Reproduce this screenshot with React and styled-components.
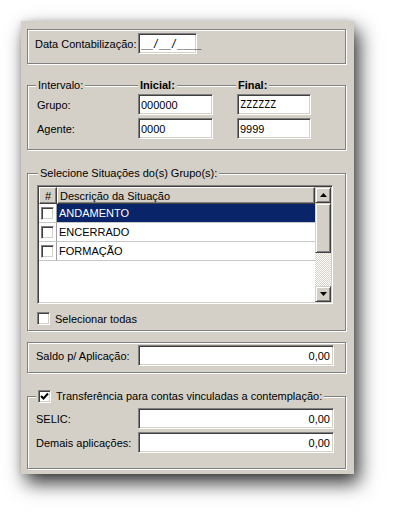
import React from 'react';
import styled, { createGlobalStyle } from 'styled-components';

const GlobalStyle = createGlobalStyle`
  body {
    margin: 0;
    background: #ffffff;
    font-family: 'Liberation Sans', Arial, sans-serif;
    font-size: 11px;
    color: #000;
  }
`;

const Page = styled.div`
  box-sizing: border-box;
  min-height: 517px;
  padding: 21px 0 40px 21px;
`;

const Panel = styled.div`
  box-sizing: border-box;
  width: 333px;
  height: 453px;
  background: #d4d0c8;
  padding: 0 8px 0 6px;
  display: flex;
  flex-direction: column;
  box-shadow: 5px 9px 18px rgba(0, 0, 0, 0.8), 0 0 6px rgba(0, 0, 0, 0.12);
`;

const Group = styled.div`
  position: relative;
  box-sizing: border-box;
  height: ${p => p.$h}px;
  margin-top: ${p => p.$mt}px;
  border: 1px solid #808080;
  box-shadow: inset 1px 1px 0 #fff, 1px 1px 0 #fff;
  padding: ${p => p.$pad};
`;

const Legend = styled.div`
  position: absolute;
  top: -7px;
  left: ${p => p.$left}px;
  background: #d4d0c8;
  padding: 0 2px;
  line-height: 13px;
  font-weight: ${p => (p.$bold ? 'bold' : 'normal')};
  display: flex;
  align-items: center;
  gap: 5px;
`;

const FormGrid = styled.div`
  display: grid;
  grid-template-columns: ${p => p.$cols};
  row-gap: 3px;
  align-items: center;
`;

const Label = styled.span`
  white-space: nowrap;
`;

const Input = styled.div`
  box-sizing: border-box;
  height: 21px;
  width: ${p => p.$w}px;
  margin-left: ${p => p.$ml || 0}px;
  background: #fff;
  border: 1px solid;
  border-color: #808080 #fff #fff #808080;
  box-shadow: inset 1px 1px 0 #404040, inset -1px -1px 0 #d4d0c8;
  padding: 0 3px 0 2px;
  display: flex;
  align-items: center;
  justify-content: ${p => (p.$right ? 'flex-end' : 'flex-start')};
  font-family: ${p => (p.$mono ? "'DejaVu Sans Mono', monospace" : "'Liberation Sans', Arial, sans-serif")};
  font-size: ${p => (p.$mono ? '10px' : '11px')};
  white-space: nowrap;
`;

const Grid = styled.div`
  box-sizing: border-box;
  width: 296px;
  height: 119px;
  border: 1px solid;
  border-color: #808080 #fff #fff #808080;
  box-shadow: inset 1px 1px 0 #404040, inset -1px -1px 0 #d4d0c8;
  padding: 1px;
  display: flex;
  background: #fff;
`;

const List = styled.div`
  flex: 1;
  display: flex;
  flex-direction: column;
`;

const Row = styled.div`
  display: grid;
  grid-template-columns: 18px 1fr;
  height: ${p => p.$h}px;
`;

const HeadCell = styled.div`
  box-sizing: border-box;
  background: #d4d0c8;
  border: 1px solid;
  border-color: #fff #404040 #404040 #fff;
  box-shadow: inset -1px -1px 0 #808080;
  display: flex;
  align-items: center;
  justify-content: ${p => (p.$center ? 'center' : 'flex-start')};
  padding-left: ${p => (p.$center ? 0 : 2)}px;
`;

const Cell = styled.div`
  box-sizing: border-box;
  border-bottom: 1px solid #c8c8c8;
  border-right: ${p => (p.$first ? '1px solid #a0a0a0' : '0')};
  background: ${p => (p.$sel ? '#0a246a' : '#fff')};
  color: ${p => (p.$sel ? '#fff' : '#000')};
  display: flex;
  align-items: center;
  justify-content: ${p => (p.$first ? 'center' : 'flex-start')};
  padding-left: ${p => (p.$first ? 0 : 2)}px;
`;

const Box = styled.span`
  box-sizing: border-box;
  width: 13px;
  height: 13px;
  flex: none;
  background: #fff;
  border: 1px solid;
  border-color: #808080 #fff #fff #808080;
  box-shadow: inset 1px 1px 0 #404040, inset -1px -1px 0 #d4d0c8;
  display: flex;
  align-items: center;
  justify-content: center;
`;

const ScrollBar = styled.div`
  width: 16px;
  display: flex;
  flex-direction: column;
`;

const Btn = styled.div`
  box-sizing: border-box;
  height: ${p => p.$h}px;
  background: #d4d0c8;
  border: 1px solid;
  border-color: #d4d0c8 #404040 #404040 #d4d0c8;
  box-shadow: inset 1px 1px 0 #fff, inset -1px -1px 0 #808080;
  display: flex;
  align-items: center;
  justify-content: center;
`;

const Track = styled.div`
  flex: 1;
  background: repeating-conic-gradient(#d4d0c8 0 25%, #fff 0 50%) 0 0 / 2px 2px;
`;

const CheckLine = styled.div`
  display: flex;
  align-items: center;
  gap: 5px;
  margin-top: 8px;
`;

const Arrow = ({ down }) => (
  <svg width="7" height="4" viewBox="0 0 7 4">
    <polygon points={down ? '0,0 7,0 3.5,4' : '0,4 7,4 3.5,0'} fill="#000" />
  </svg>
);

const Check = () => (
  <svg width="9" height="9" viewBox="0 0 9 9">
    <polyline points="1,4 3.5,6.5 8,1.5" fill="none" stroke="#000" strokeWidth="2" />
  </svg>
);

const situacoes = [
  { nome: 'ANDAMENTO', sel: true },
  { nome: 'ENCERRADO' },
  { nome: 'FORMAÇÃO' },
];

export default function App() {
  return (
    <Page>
      <GlobalStyle />
      <Panel>
        <Group $h={35} $mt={8} $pad="3px 0 0 7px">
          <FormGrid $cols="103px 59px">
            <Label>Data Contabilização:</Label>
            <Input $w={59} $mono>__/__/____</Input>
          </FormGrid>
        </Group>

        <Group $h={65} $mt={21} $pad="8px 0 0 9px">
          <Legend $left={8}>Intervalo:</Legend>
          <Legend $left={110} $bold>Inicial:</Legend>
          <Legend $left={208} $bold>Final:</Legend>
          <FormGrid $cols="101px 75px 98px">
            <Label>Grupo:</Label>
            <Input $w={75}>000000</Input>
            <Input $w={74} $ml={24} $mono>ZZZZZZ</Input>
            <Label>Agente:</Label>
            <Input $w={75}>0000</Input>
            <Input $w={74} $ml={24}>9999</Input>
          </FormGrid>
        </Group>

        <Group $h={158} $mt={23} $pad="11px 0 0 9px">
          <Legend $left={10}>Selecione Situações do(s) Grupo(s):</Legend>
          <Grid>
            <List>
              <Row $h={17}>
                <HeadCell $center>#</HeadCell>
                <HeadCell>Descrição da Situação</HeadCell>
              </Row>
              {situacoes.map(s => (
                <Row $h={19} key={s.nome}>
                  <Cell $first>
                    <Box />
                  </Cell>
                  <Cell $sel={s.sel}>{s.nome}</Cell>
                </Row>
              ))}
            </List>
            <ScrollBar>
              <Btn $h={16}><Arrow /></Btn>
              <Btn $h={50} />
              <Track />
              <Btn $h={16}><Arrow down /></Btn>
            </ScrollBar>
          </Grid>
          <CheckLine>
            <Box />
            <Label>Selecionar todas</Label>
          </CheckLine>
        </Group>

        <Group $h={31} $mt={11} $pad="2px 0 0 8px">
          <FormGrid $cols="102px 196px">
            <Label>Saldo p/ Aplicação:</Label>
            <Input $w={196} $right>0,00</Input>
          </FormGrid>
        </Group>

        <Group $h={73} $mt={23} $pad="11px 0 0 8px">
          <Legend $left={8}>
            <Box><Check /></Box>
            Transferência para contas vinculadas a contemplação:
          </Legend>
          <FormGrid $cols="102px 196px">
            <Label>SELIC:</Label>
            <Input $w={196} $right>0,00</Input>
            <Label>Demais aplicações:</Label>
            <Input $w={196} $right>0,00</Input>
          </FormGrid>
        </Group>
      </Panel>
    </Page>
  );
}
